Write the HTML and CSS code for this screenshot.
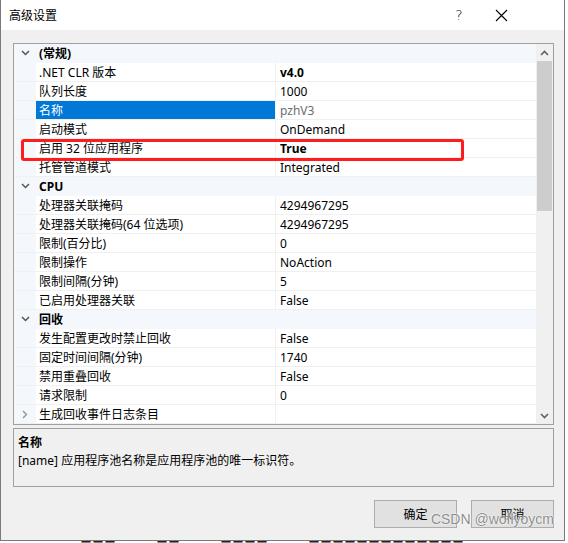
FILE: index.html
```html
<!DOCTYPE html>
<html lang="zh-CN">
<head>
  <meta charset="UTF-8" />
  <title>高级设置</title>
  <link rel="stylesheet" href="styles.css">
</head>
<body>
  <div class="dialog">
    <div class="titlebar">
      <span class="title">高级设置</span>
      <span class="tb-btn help">?</span>
      <span class="tb-btn close">
        <svg width="13" height="13" viewBox="0 0 13 13"><path d="M1 1L12 12M12 1L1 12" stroke="#000" stroke-width="1.1" fill="none"/></svg>
      </span>
    </div>

    <div class="content">
      <div class="grid">
        <div class="rows" id="rows"></div>
        <div class="scrollbar">
          <div class="arrow">
            <svg width="9" height="6" viewBox="0 0 9 6"><path d="M1 5L4.5 1.5L8 5" stroke="#606060" stroke-width="1.6" fill="none"/></svg>
          </div>
          <div class="track"><div class="thumb"></div></div>
          <div class="arrow">
            <svg width="9" height="6" viewBox="0 0 9 6"><path d="M1 1L4.5 4.5L8 1" stroke="#606060" stroke-width="1.6" fill="none"/></svg>
          </div>
        </div>
        <div class="highlight"></div>
      </div>

      <div class="desc">
        <div class="desc-title">名称</div>
        <div class="desc-text">[name] 应用程序池名称是应用程序池的唯一标识符。</div>
      </div>

      <div class="buttons">
        <button class="btn">确定</button>
        <button class="btn">取消</button>
      </div>
      <div class="watermark">CSDN @woflyoycm</div>
    </div>
  </div>
  <div class="behind">
    <span>三三三</span><span>三三</span><span>三三三三</span><span>三三三三三三三三三三三三三</span>
  </div>

  <script>
    // property grid: [type, name, value, flags]
    const props = [
      ['cat', '(常规)'],
      ['row', '.NET CLR 版本', 'v4.0', 'bold'],
      ['row', '队列长度', '1000'],
      ['row', '名称', 'pzhV3', 'selected'],
      ['row', '启动模式', 'OnDemand'],
      ['row', '启用 32 位应用程序', 'True', 'bold'],
      ['row', '托管管道模式', 'Integrated'],
      ['cat', 'CPU'],
      ['row', '处理器关联掩码', '4294967295'],
      ['row', '处理器关联掩码(64 位选项)', '4294967295'],
      ['row', '限制(百分比)', '0'],
      ['row', '限制操作', 'NoAction'],
      ['row', '限制间隔(分钟)', '5'],
      ['row', '已启用处理器关联', 'False'],
      ['cat', '回收'],
      ['row', '发生配置更改时禁止回收', 'False'],
      ['row', '固定时间间隔(分钟)', '1740'],
      ['row', '禁用重叠回收', 'False'],
      ['row', '请求限制', '0'],
      ['sub', '生成回收事件日志条目', '']
    ];

    const down = '<svg width="9" height="6" viewBox="0 0 9 6"><path d="M1 1L4.5 4.5L8 1" stroke="#555" stroke-width="1.5" fill="none"/></svg>';
    const right = '<svg width="6" height="9" viewBox="0 0 6 9"><path d="M1 1L4.5 4.5L1 8" stroke="#999" stroke-width="1.5" fill="none"/></svg>';

    const rows = document.getElementById('rows');
    props.forEach(([type, name, value, flag]) => {
      const row = document.createElement('div');
      if (type === 'cat') {
        row.className = 'row cat';
        row.innerHTML = `<div class="gutter">${down}</div><div class="cat-name">${name}</div>`;
      } else {
        row.className = 'row' + (flag === 'selected' ? ' selected' : '');
        row.innerHTML = `
          <div class="gutter">${type === 'sub' ? right : ''}</div>
          <div class="name">${name}</div>
          <div class="value${flag === 'bold' ? ' bold' : ''}">${value}</div>`;
      }
      rows.appendChild(row);
    });
  </script>
</body>
</html>
```

FILE: styles.css
```css
* {
  margin: 0;
  padding: 0;
  box-sizing: border-box;
}

body {
  width: 568px;
  height: 543px;
  overflow: hidden;
  background: #fff;
  font-family: "Noto Sans", "Noto Sans CJK SC", sans-serif;
  font-size: 12px;
  color: #000;
}

.dialog {
  width: 565px;
  height: 541px;
  border-left: 1px solid #7a7a7a;
  border-right: 1px solid #7a7a7a;
  border-bottom: 1px solid #7a7a7a;
  background: #f0f0f0;
  display: flex;
  flex-direction: column;
}

.titlebar {
  height: 30px;
  background: #fff;
  display: flex;
  align-items: center;
}

.title {
  padding-left: 8px;
  font-size: 12px;
  flex: 1;
}

.tb-btn {
  height: 30px;
  display: flex;
  align-items: center;
  justify-content: center;
}

.help {
  width: 42px;
  font-size: 14px;
  font-family: "DejaVu Sans", sans-serif;
  font-weight: 300;
}

.close {
  width: 42px;
  margin-right: 42px;
}

.content {
  flex: 1;
  position: relative;
  padding: 13px 10px 0 12px;
}

/* property grid */
.grid {
  position: relative;
  height: 382px;
  border: 1px solid #a0a0a0;
  background: #fff;
  display: flex;
}

.rows {
  flex: 1;
}

.row {
  height: 19px;
  display: flex;
  border-bottom: 1px solid #f0f0f0;
  line-height: 18px;
}

.gutter {
  width: 22px;
  flex: none;
  background: #f4f7fc;
  display: flex;
  align-items: center;
  justify-content: center;
}

.row.cat {
  background: #f4f7fc;
  border-bottom-color: #f4f7fc;
}

.cat-name,
.name,
.value {
  padding-top: 1px;
}

.cat-name {
  padding-left: 3px;
  font-weight: bold;
}

.name {
  width: 240px;
  flex: none;
  padding-left: 3px;
  border-right: 1px solid #f0f0f0;
  white-space: nowrap;
}

.value {
  padding-left: 4px;
  white-space: nowrap;
}

.value.bold {
  font-weight: bold;
}

.row.selected .name {
  background: #0078d7;
  color: #fff;
}

.row.selected .value {
  color: #6d6d6d;
}

.scrollbar {
  width: 17px;
  flex: none;
  background: #f0f0f0;
  display: flex;
  flex-direction: column;
}

.arrow {
  height: 17px;
  display: flex;
  align-items: center;
  justify-content: center;
}

.track {
  flex: 1;
  padding: 0 1px;
}

.thumb {
  height: 150px;
  background: #cdcdcd;
}

.highlight {
  position: absolute;
  left: 7px;
  top: 95px;
  width: 443px;
  height: 22px;
  border: 3px solid #ff1c1c;
  border-radius: 3px;
}

/* description panel */
.desc {
  margin-top: 3px;
  height: 59px;
  border: 1px solid #a0a0a0;
  padding: 5px 4px;
}

.desc-title {
  font-weight: bold;
  line-height: 18px;
}

.desc-text {
  line-height: 17px;
}

.buttons {
  margin-top: 13px;
  display: flex;
  justify-content: flex-end;
  gap: 14px;
}

.btn {
  width: 83px;
  height: 28px;
  padding-bottom: 2px;
  background: #e1e1e1;
  border: 1px solid #adadad;
  font-family: "Noto Sans CJK SC", sans-serif;
  font-size: 12px;
  color: #000;
}

.watermark {
  position: absolute;
  right: 10px;
  bottom: 13px;
  font-family: "Liberation Sans", sans-serif;
  font-size: 14px;
  color: rgba(110, 110, 110, 0.8);
  text-shadow: 0 0 2px #fff, 0 0 1px #fff;
}

.behind {
  display: flex;
  gap: 40px;
  padding-left: 80px;
  font-size: 12px;
  font-weight: bold;
  color: #222;
  line-height: 12px;
}
```
